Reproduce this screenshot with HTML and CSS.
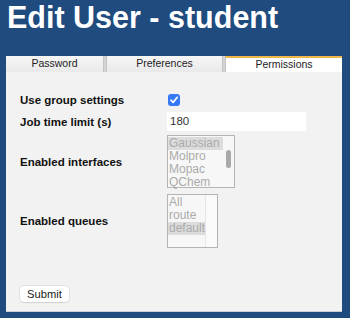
FILE: index.html
```html
<!DOCTYPE html>
<html lang="en">
<head>
<meta charset="utf-8">
<title>Edit User - student</title>
<link rel="stylesheet" href="styles.css">
</head>
<body>
<h1 class="title">Edit User - student</h1>
<div class="panel">
  <div class="tabs">
    <div class="tab">Password</div>
    <div class="tab">Preferences</div>
    <div class="tab tab-active">Permissions</div>
  </div>
  <form class="content">
    <div class="row row-check">
      <span class="label">Use group settings</span>
      <span class="checkbox"><svg width="12" height="12" viewBox="0 0 12 12"><path d="M3 6.2 L5.1 8.4 L9.2 3.4" fill="none" stroke="#fff" stroke-width="1.7" stroke-linecap="round" stroke-linejoin="round"/></svg></span>
    </div>
    <div class="row row-input">
      <span class="label">Job time limit (s)</span>
      <span class="textbox">180</span>
    </div>
    <div class="row row-list1">
      <span class="label">Enabled interfaces</span>
      <div class="listbox list1">
        <div class="options">
          <div class="opt sel">Gaussian</div>
          <div class="opt">Molpro</div>
          <div class="opt">Mopac</div>
          <div class="opt">QChem</div>
        </div>
        <div class="track"><div class="thumb"></div></div>
      </div>
    </div>
    <div class="row row-list2">
      <span class="label">Enabled queues</span>
      <div class="listbox list2">
        <div class="options">
          <div class="opt">All</div>
          <div class="opt">route</div>
          <div class="opt sel">default</div>
          <div class="opt">&nbsp;</div>
        </div>
        <div class="track track2"></div>
      </div>
    </div>
    <div class="submit-row">
      <button type="button" class="submit">Submit</button>
    </div>
  </form>
</div>
</body>
</html>
```
FILE: styles.css
```css
html, body {
  margin: 0;
  padding: 0;
}
body {
  background: #1f4b7f;
  font-family: "Liberation Sans", Arial, sans-serif;
  width: 350px;
  height: 318px;
  overflow: hidden;
}
.title {
  margin: 0 0 22px 7px;
  font-size: 30.5px;
  line-height: 34px;
  font-weight: bold;
  color: #ffffff;
}
.panel {
  margin-left: 6px;
  width: 336px;
  background: #f2f2f2;
  border-bottom: 1px solid #c9ced6;
}
.tabs {
  display: flex;
  gap: 2px;
  background: #d4d4d4;
  height: 16px;
}
.tab {
  box-sizing: border-box;
  height: 16px;
  background: linear-gradient(#f6f6f6, #e9e9e9);
  border-left: 1px solid #c4c4c4;
  border-right: 1px solid #c4c4c4;
  font-size: 10.5px;
  line-height: 15px;
  color: #222;
  text-align: center;
}
.tab:nth-child(1) { width: 98px; border-left: 0; }
.tab:nth-child(2) { width: 117px; }
.tab-active {
  flex: 1;
  background: #ffffff;
  border-top: 2px solid #f1b64a;
  border-right: 0;
  line-height: 13px;
}
.content {
  display: flex;
  flex-direction: column;
  padding: 21px 0 9px 14px;
  margin: 0;
}
.row {
  display: flex;
  align-items: center;
}
.label {
  width: 147px;
  font-size: 11.5px;
  font-weight: bold;
  color: #111;
}
.row-check { height: 14px; }
.checkbox {
  width: 12px;
  height: 12px;
  margin-left: 1px;
  background: #3478f6;
  border-radius: 3px;
  display: flex;
}
.row-input { margin-top: 5px; }
.textbox {
  box-sizing: border-box;
  width: 139px;
  height: 19px;
  background: #ffffff;
  font-size: 11.5px;
  line-height: 19px;
  padding-left: 3px;
  color: #333;
}
.row-list1 { margin-top: 4px; }
.row-list2 { margin-top: 6px; }
.listbox {
  box-sizing: border-box;
  display: flex;
  border: 1px solid #b4b4b4;
  background: #f7f7f7;
}
.list1 { width: 68px; height: 53px; }
.list2 { width: 51px; height: 54px; }
.options {
  flex: 1;
  padding-top: 1px;
}
.opt {
  font-size: 12px;
  line-height: 13px;
  height: 13px;
  padding-left: 1px;
  color: #ababab;
  white-space: nowrap;
}
.opt.sel { background: #dcdcdc; }
.track {
  width: 11px;
  display: flex;
  justify-content: center;
}
.thumb {
  margin-top: 14px;
  width: 5px;
  height: 18px;
  border-radius: 3px;
  background: #a9a9a9;
}
.track2 {
  border-left: 1px solid #e6e6e6;
  background: #fafafa;
}
.submit-row {
  margin-top: 38px;
  display: flex;
}
.submit {
  width: 49px;
  height: 16px;
  padding: 0;
  border: 0;
  border-radius: 4px;
  background: #ffffff;
  box-shadow: 0 0 0 0.5px #cfcfcf, 0 1px 1px rgba(0,0,0,0.12);
  font-family: "Liberation Sans", Arial, sans-serif;
  font-size: 11.2px;
  line-height: 16px;
  color: #222;
}
```
